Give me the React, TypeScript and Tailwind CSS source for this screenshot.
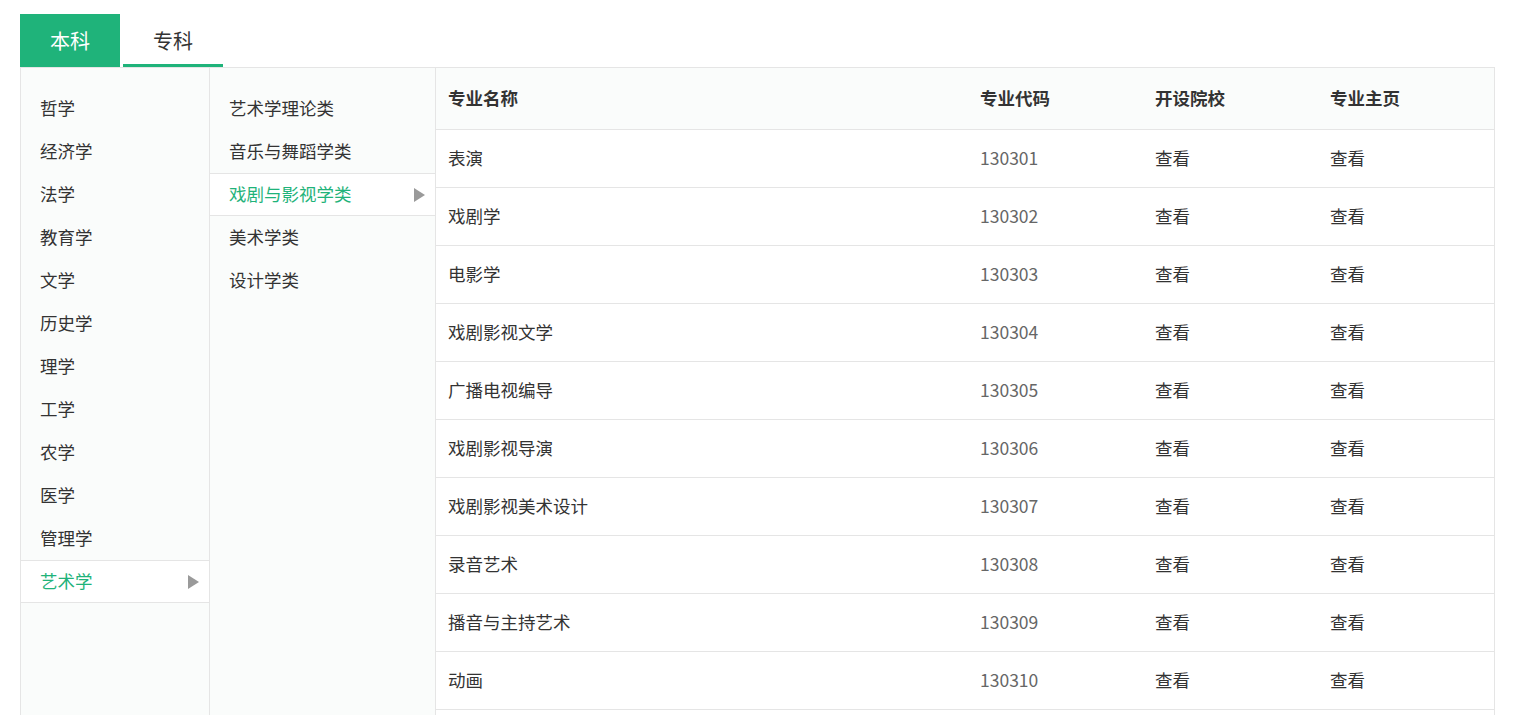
const disciplines = ["哲学", "经济学", "法学", "教育学", "文学", "历史学", "理学", "工学", "农学", "医学", "管理学", "艺术学"];
const categories = ["艺术学理论类", "音乐与舞蹈学类", "戏剧与影视学类", "美术学类", "设计学类"];
const majors = [
  ["表演", "130301"],
  ["戏剧学", "130302"],
  ["电影学", "130303"],
  ["戏剧影视文学", "130304"],
  ["广播电视编导", "130305"],
  ["戏剧影视导演", "130306"],
  ["戏剧影视美术设计", "130307"],
  ["录音艺术", "130308"],
  ["播音与主持艺术", "130309"],
  ["动画", "130310"],
];

function Arrow() {
  return (
    <svg width="11" height="14" viewBox="0 0 11 14" className="shrink-0">
      <polygon points="0,0 11,7 0,14" fill="#9a9a9a" />
    </svg>
  );
}

function SideItem({ label, active }: { label: string; active: boolean }) {
  if (active) {
    return (
      <div className="flex h-[43px] items-center justify-between border-y border-[#e5e5e5] bg-white pl-[19px] pr-[10px] text-[#1fb37a]">
        <span>{label}</span>
        <Arrow />
      </div>
    );
  }
  return <div className="flex h-[43px] items-center pl-[19px]">{label}</div>;
}

export default function App() {
  return (
    <div
      className="min-h-screen bg-white pl-[20px] pr-[30px] pt-[14px] text-[17.5px] text-[#333]"
      style={{ fontFamily: '"Noto Sans CJK SC", "Noto Sans", sans-serif' }}
    >
      <div className="flex gap-[3px]">
        <div className="flex h-[53px] w-[100px] items-center justify-center bg-[#1fb37a] text-[20px] text-white">本科</div>
        <div className="flex h-[53px] w-[100px] items-center justify-center border-b-[3px] border-[#1fb37a] pt-[3px] text-[20px] text-[#333]">专科</div>
      </div>
      <div className="flex min-h-[700px] border border-[#e5e5e5]">
        <div className="w-[189px] shrink-0 border-r border-[#e5e5e5] bg-[#fafcfb] pt-[19px]">
          {disciplines.map((d) => (
            <SideItem key={d} label={d} active={d === "艺术学"} />
          ))}
        </div>
        <div className="w-[226px] shrink-0 border-r border-[#e5e5e5] bg-[#fafcfb] pt-[19px]">
          {categories.map((c) => (
            <SideItem key={c} label={c} active={c === "戏剧与影视学类"} />
          ))}
        </div>
        <div className="flex-1">
          <div className="grid h-[62px] grid-cols-[532px_175px_175px_1fr] items-center border-b border-[#e5e5e5] bg-[#fafcfb] font-bold text-[#333]">
            <div className="pl-[12px]">专业名称</div>
            <div className="pl-[12px]">专业代码</div>
            <div className="pl-[12px]">开设院校</div>
            <div className="pl-[12px]">专业主页</div>
          </div>
          {majors.map(([name, code]) => (
            <div
              key={code}
              className="grid h-[58px] grid-cols-[532px_175px_175px_1fr] items-center border-b border-[#e5e5e5] bg-white"
            >
              <div className="pl-[12px]">{name}</div>
              <div className="pl-[12px] text-[#666]">{code}</div>
              <div className="pl-[12px]">查看</div>
              <div className="pl-[12px]">查看</div>
            </div>
          ))}
        </div>
      </div>
    </div>
  );
}
